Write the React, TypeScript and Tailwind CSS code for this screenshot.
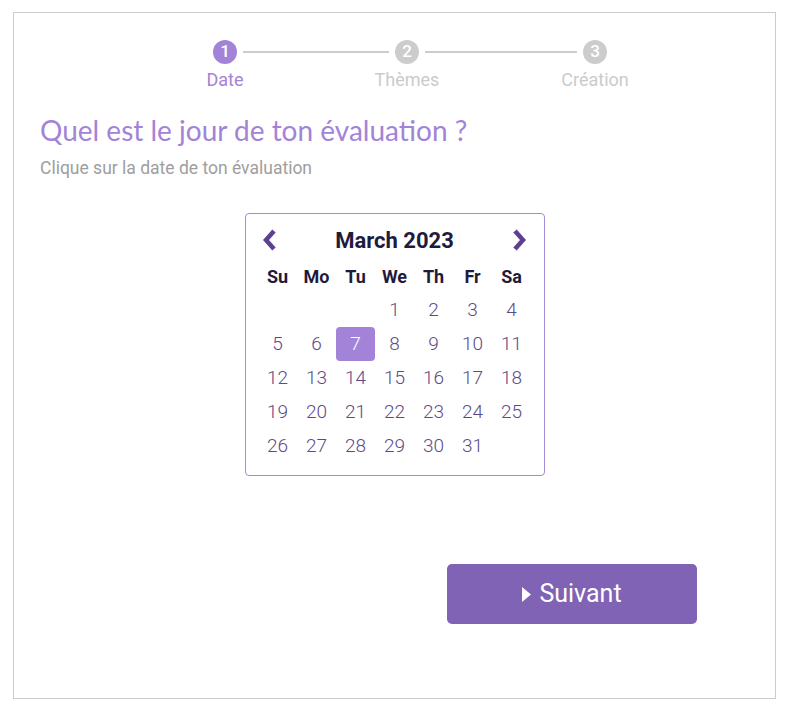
import React from 'react';

const steps = [
  { n: 1, label: 'Date', active: true },
  { n: 2, label: 'Thèmes', active: false },
  { n: 3, label: 'Création', active: false },
];

const dayNames = ['Su', 'Mo', 'Tu', 'We', 'Th', 'Fr', 'Sa'];

export default function App() {
  // March 2023 starts on a Wednesday
  const cells: (number | null)[] = [null, null, null];
  for (let d = 1; d <= 31; d++) cells.push(d);
  const selected = 7;

  return (
    <div className="bg-white w-[790px] h-[708px] pt-[12px] pl-[13px]" style={{ fontFamily: 'Roboto, "Liberation Sans", sans-serif' }}>
      <div className="w-[763px] h-[687px] border border-[#cccccc] flex flex-col">
        {/* Stepper */}
        <div className="flex items-start ml-[199px] mt-[27px]">
          {steps.map((s, i) => (
            <React.Fragment key={s.n}>
              <div className="flex flex-col items-center w-[24px]">
                <div
                  className={`w-[24px] h-[24px] rounded-full flex items-center justify-center text-white text-[17px] font-medium ${
                    s.active ? 'bg-[#a383d8]' : 'bg-[#cccccc]'
                  }`}
                >
                  {s.n}
                </div>
                <div
                  className={`mt-[6px] text-[18px] leading-[20px] whitespace-nowrap ${
                    s.active ? 'text-[#a383d8]' : 'text-[#cbcbcb]'
                  }`}
                >
                  {s.label}
                </div>
              </div>
              {i < steps.length - 1 && (
                <div className={`h-[2px] bg-[#cccccc] mt-[11px] mx-[6px] ${i === 0 ? 'w-[146px]' : 'w-[152px]'}`} />
              )}
            </React.Fragment>
          ))}
        </div>

        {/* Heading */}
        <h1 className="ml-[26px] mt-[24px] text-[28px] leading-[32px] text-[#a383d8]" style={{ fontFamily: 'Lato, "Noto Sans", sans-serif' }}>
          Quel est le jour de ton évaluation ?
        </h1>
        <p className="ml-[26px] mt-[12px] text-[17.5px] leading-[20px] text-[#9e9e9e]">Clique sur la date de ton évaluation</p>

        {/* Calendar */}
        <div className="mx-auto mt-[35px] w-[300px] border border-[#a58ad8] rounded-[4px] px-[12px] pt-[11px] pb-[12px]">
          <div className="h-[30px] flex items-center justify-between px-[3px]">
            <svg width="18" height="24" viewBox="0 0 18 24">
              <polyline points="13,3 5,12 13,21" fill="none" stroke="#5e3f93" strokeWidth="4.5" strokeLinejoin="miter" />
            </svg>
            <div className="text-[22px] font-bold text-[#1f1b3d]">March 2023</div>
            <svg width="18" height="24" viewBox="0 0 18 24">
              <polyline points="5,3 13,12 5,21" fill="none" stroke="#5e3f93" strokeWidth="4.5" strokeLinejoin="miter" />
            </svg>
          </div>
          <div className="mt-[4px] grid grid-cols-[repeat(7,39px)] justify-center">
            {dayNames.map((d) => (
              <div key={d} className="h-[34px] flex items-center justify-center text-[18px] font-bold text-[#1f1b3d]">
                {d}
              </div>
            ))}
            {cells.map((d, i) => (
              <div
                key={i}
                className={`h-[34px] flex items-center justify-center text-[19px] font-light ${
                  d === selected ? 'bg-[#a383d8] text-white rounded-[4px]' : 'text-[#5c4a86]'
                }`}
              >
                {d ?? ''}
              </div>
            ))}
          </div>
        </div>

        {/* Button */}
        <button className="ml-[433px] mt-[88px] w-[250px] h-[60px] bg-[#8063b5] rounded-[5px] flex items-center justify-center gap-[8px] text-white text-[25px]">
          <svg width="9" height="15" viewBox="0 0 9 15">
            <polygon points="0,0 9,7.5 0,15" fill="white" />
          </svg>
          Suivant
        </button>
      </div>
    </div>
  );
}
